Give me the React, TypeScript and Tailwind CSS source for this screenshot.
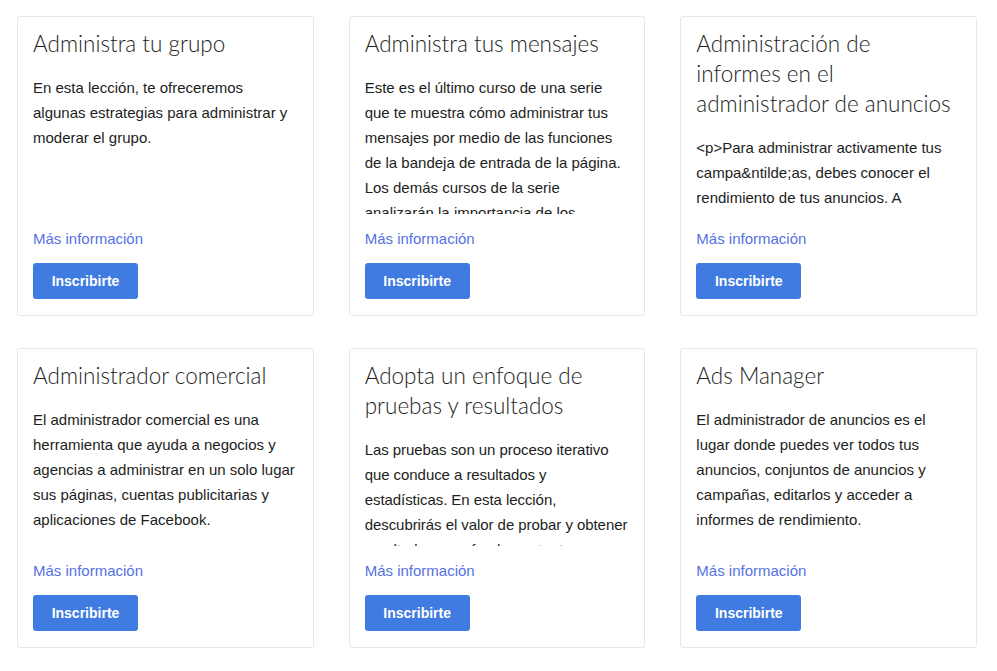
import React from "react";

const cards = [
  {
    title: "Administra tu grupo",
    body: "En esta lección, te ofreceremos algunas estrategias para administrar y moderar el grupo.",
  },
  {
    title: "Administra tus mensajes",
    body: "Este es el último curso de una serie que te muestra cómo administrar tus mensajes por medio de las funciones de la bandeja de entrada de la página. Los demás cursos de la serie analizarán la importancia de los mensajes y cómo usarlos.",
  },
  {
    title: "Administración de informes en el administrador de anuncios",
    body: "<p>Para administrar activamente tus campa&ntilde;as, debes conocer el rendimiento de tus anuncios. A continuación, te mostraremos cómo hacerlo.",
  },
  {
    title: "Administrador comercial",
    body: "El administrador comercial es una herramienta que ayuda a negocios y agencias a administrar en un solo lugar sus páginas, cuentas publicitarias y aplicaciones de Facebook.",
  },
  {
    title: "Adopta un enfoque de pruebas y resultados",
    body: "Las pruebas son un proceso iterativo que conduce a resultados y estadísticas. En esta lección, descubrirás el valor de probar y obtener resultados para fundamentar tu estrategia.",
    tight: true,
  },
  {
    title: "Ads Manager",
    body: "El administrador de anuncios es el lugar donde puedes ver todos tus anuncios, conjuntos de anuncios y campañas, editarlos y acceder a informes de rendimiento.",
  },
];

export default function App() {
  return (
    <div className="min-h-[671px] bg-white pl-[17px] pr-[20px] pt-[16px]">
      <div className="grid grid-cols-3 gap-x-[35px] gap-y-[32px]">
        {cards.map((c, i) => (
          <div
            key={i}
            className="flex flex-col rounded-[3px] border border-[#e6e8eb] bg-white px-[15px] pb-[16px] pt-[12px]"
          >
            <div className="h-[185px] overflow-hidden">
              <h2
                className="pr-[5px] text-[22.5px] font-light leading-[30px] text-[#1c1e21]"
                style={{ fontFamily: "Lato, 'Noto Sans', sans-serif" }}
              >
                {c.title}
              </h2>
              <p
                className={
                  c.tight
                    ? "mt-[16px] text-[15px] leading-[25px] tracking-[-0.06px] text-[#1c1e21]"
                    : "mt-[16px] text-[15px] leading-[25px] text-[#1c1e21]"
                }
                style={{ fontFamily: "'Liberation Sans', Arial, sans-serif" }}
              >
                {c.body}
              </p>
            </div>
            <a
              className="mt-[15px] block text-[15px] leading-[20px] text-[#5572e2]"
              style={{ fontFamily: "'Liberation Sans', Arial, sans-serif" }}
            >
              Más información
            </a>
            <div className="mt-[14px]">
              <button
                className="h-[36px] w-[105px] rounded-[3px] bg-[#3f7be0] text-[14px] font-bold text-white"
                style={{ fontFamily: "'Liberation Sans', Arial, sans-serif" }}
              >
                Inscribirte
              </button>
            </div>
          </div>
        ))}
      </div>
    </div>
  );
}
